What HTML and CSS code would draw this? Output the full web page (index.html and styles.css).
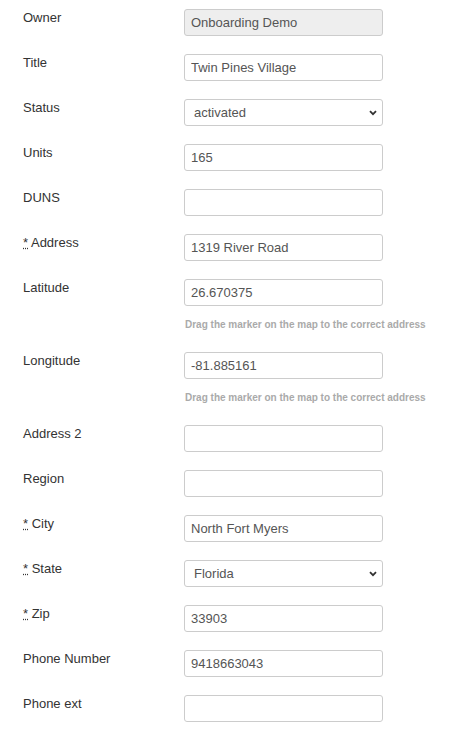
FILE: index.html
```html
<!DOCTYPE html>
<html>
<head>
<meta charset="utf-8">
<link rel="stylesheet" href="styles.css">
</head>
<body>
<form class="form">
  <div class="row"><label class="lbl">Owner</label><div class="ctl"><input class="inp" type="text" value="Onboarding Demo" disabled></div></div>
  <div class="row"><label class="lbl">Title</label><div class="ctl"><input class="inp" type="text" value="Twin Pines Village"></div></div>
  <div class="row"><label class="lbl">Status</label><div class="ctl"><select class="inp sel"><option>activated</option></select></div></div>
  <div class="row"><label class="lbl">Units</label><div class="ctl"><input class="inp" type="text" value="165"></div></div>
  <div class="row"><label class="lbl">DUNS</label><div class="ctl"><input class="inp" type="text" value=""></div></div>
  <div class="row"><label class="lbl"><abbr title="required">*</abbr> Address</label><div class="ctl"><input class="inp" type="text" value="1319 River Road"></div></div>
  <div class="row"><label class="lbl">Latitude</label><div class="ctl"><input class="inp" type="text" value="26.670375"><p class="help">Drag the marker on the map to the correct address</p></div></div>
  <div class="row"><label class="lbl">Longitude</label><div class="ctl"><input class="inp" type="text" value="-81.885161"><p class="help">Drag the marker on the map to the correct address</p></div></div>
  <div class="row"><label class="lbl">Address 2</label><div class="ctl"><input class="inp" type="text" value=""></div></div>
  <div class="row"><label class="lbl">Region</label><div class="ctl"><input class="inp" type="text" value=""></div></div>
  <div class="row"><label class="lbl"><abbr title="required">*</abbr> City</label><div class="ctl"><input class="inp" type="text" value="North Fort Myers"></div></div>
  <div class="row"><label class="lbl"><abbr title="required">*</abbr> State</label><div class="ctl"><select class="inp sel"><option>Florida</option></select></div></div>
  <div class="row"><label class="lbl"><abbr title="required">*</abbr> Zip</label><div class="ctl"><input class="inp" type="text" value="33903"></div></div>
  <div class="row"><label class="lbl">Phone Number</label><div class="ctl"><input class="inp" type="text" value="9418663043"></div></div>
  <div class="row"><label class="lbl">Phone ext</label><div class="ctl"><input class="inp" type="text" value=""></div></div>
</form>
</body>
</html>
```
FILE: styles.css
```css
html, body {
  margin: 0;
  background: #fff;
}
body {
  padding: 9px 0 0 23px;
  font-family: "Liberation Sans", Arial, sans-serif;
  font-size: 13px;
  color: #333;
}
.form {
  display: flex;
  flex-direction: column;
  gap: 18px;
}
.row {
  display: flex;
  align-items: flex-start;
}
.lbl {
  width: 161px;
  flex: none;
  line-height: 18px;
  color: #333;
}
.lbl abbr {
  text-decoration: underline dotted;
  cursor: help;
}
.ctl {
  width: 199px;
  flex: none;
}
.inp {
  display: block;
  box-sizing: border-box;
  width: 199px;
  height: 27px;
  margin: 0;
  padding: 0 6px;
  border: 1px solid #ccc;
  border-radius: 3px;
  background: #fff;
  font-family: "Liberation Sans", Arial, sans-serif;
  font-size: 13px;
  color: #555;
  outline: none;
}
.inp:disabled {
  background: #eee;
  color: #555;
  opacity: 1;
}
.sel {
  appearance: none;
  -webkit-appearance: none;
  padding-left: 9px;
  background-image: url("data:image/svg+xml,%3Csvg xmlns='http://www.w3.org/2000/svg' width='8' height='6' viewBox='0 0 8 6'%3E%3Cpath d='M1 1.2 L4 4.2 L7 1.2' fill='none' stroke='%23333' stroke-width='1.8'/%3E%3C/svg%3E");
  background-repeat: no-repeat;
  background-position: right 5px center;
  background-size: 8px 6px;
}
.help {
  margin: 12px 0 2px 1px;
  line-height: 14px;
  font-size: 10px;
  font-weight: 700;
  color: #aaa;
  white-space: nowrap;
}
```
